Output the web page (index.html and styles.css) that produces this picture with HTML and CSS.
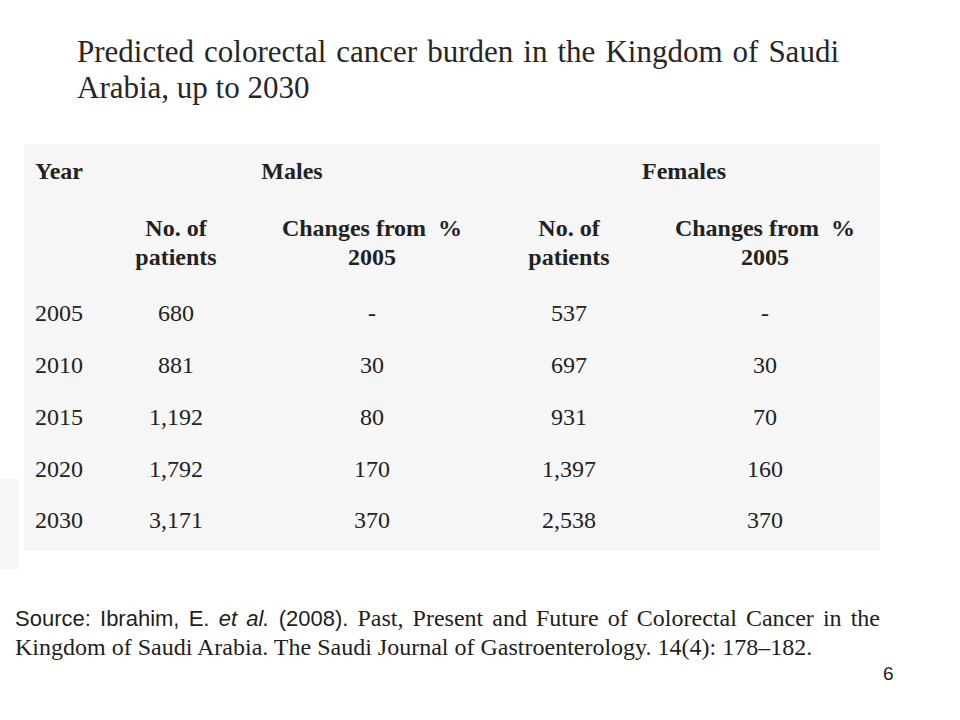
FILE: index.html
```html
<!DOCTYPE html>
<html>
<head>
<meta charset="utf-8">
<link rel="stylesheet" href="styles.css">
</head>
<body>
<div class="slide">
  <h1 class="title">Predicted colorectal cancer burden in the Kingdom of Saudi Arabia, up to 2030</h1>
  <table class="data">
    <colgroup>
      <col class="c0"><col class="c1"><col class="c2"><col class="c3"><col class="c4">
    </colgroup>
    <thead>
      <tr class="head1">
        <th class="yr">Year</th>
        <th colspan="2">Males</th>
        <th colspan="2">Females</th>
      </tr>
      <tr class="head2">
        <th></th>
        <th>No. of<br>patients</th>
        <th>Changes from&nbsp; %<br>2005</th>
        <th>No. of<br>patients</th>
        <th>Changes from&nbsp; %<br>2005</th>
      </tr>
    </thead>
    <tbody>
      <tr><td class="yr">2005</td><td>680</td><td>-</td><td>537</td><td>-</td></tr>
      <tr><td class="yr">2010</td><td>881</td><td>30</td><td>697</td><td>30</td></tr>
      <tr><td class="yr">2015</td><td>1,192</td><td>80</td><td>931</td><td>70</td></tr>
      <tr><td class="yr">2020</td><td>1,792</td><td>170</td><td>1,397</td><td>160</td></tr>
      <tr><td class="yr">2030</td><td>3,171</td><td>370</td><td>2,538</td><td>370</td></tr>
    </tbody>
  </table>
  <p class="source"><span class="sans">Source: Ibrahim, E. </span><em class="sans">et al.</em><span class="sans"> (2008).</span> <span class="serif">Past, Present and Future of Colorectal Cancer in the Kingdom of Saudi Arabia. The Saudi Journal of Gastroenterology. 14(4): 178–182.</span></p>
  <div class="pagenum">6</div>
  <div class="edge"></div>
</div>
</body>
</html>
```

FILE: styles.css
```css
html, body {
  margin: 0;
  padding: 0;
  background: #ffffff;
}

.slide {
  position: relative;
  width: 960px;
  height: 720px;
  overflow: hidden;
  color: #222222;
  font-family: "Liberation Serif", "Times New Roman", serif;
}

.title {
  margin: 0 0 0 77px;
  padding-top: 34px;
  width: 762px;
  font-size: 31px;
  font-weight: normal;
  line-height: 36px;
  text-align: justify;
  color: #262626;
}

.data {
  margin: 38px 0 0 24px;
  width: 856px;
  border-collapse: collapse;
  background: #f6f6f6;
  font-size: 24px;
  table-layout: fixed;
}

.c0 { width: 72px; }
.c1 { width: 160px; }
.c2 { width: 232px; }
.c3 { width: 162px; }
.c4 { width: 230px; }

.data th,
.data td {
  padding: 0;
  text-align: center;
  vertical-align: middle;
}

.data th {
  font-weight: bold;
}

.data .yr {
  text-align: left;
  padding-left: 11px;
}

.head1 th {
  height: 54px;
  line-height: 29px;
}

.head2 th {
  height: 89px;
  line-height: 29px;
}

.data tbody td {
  height: 52px;
  line-height: 29px;
}

.data tbody tr:last-child td {
  height: 56px;
  vertical-align: top;
  padding-top: 11px;
  box-sizing: border-box;
}

.source {
  margin: 53px 0 0 15px;
  width: 865px;
  font-size: 24px;
  line-height: 29px;
  text-align: justify;
  color: #1e1e1e;
}

.sans {
  font-family: "Liberation Sans", Arial, sans-serif;
  font-size: 22px;
  line-height: 1;
}

em.sans {
  font-style: italic;
}

.serif {
  font-family: "Liberation Serif", "Times New Roman", serif;
}

.pagenum {
  margin: 1px 0 0 883px;
  font-family: "Liberation Sans", Arial, sans-serif;
  font-size: 19px;
  line-height: 22px;
  color: #1e1e1e;
}

.edge {
  position: absolute;
  left: 0;
  top: 479px;
  width: 19px;
  height: 90px;
  background: #f6f6f6;
}
```
